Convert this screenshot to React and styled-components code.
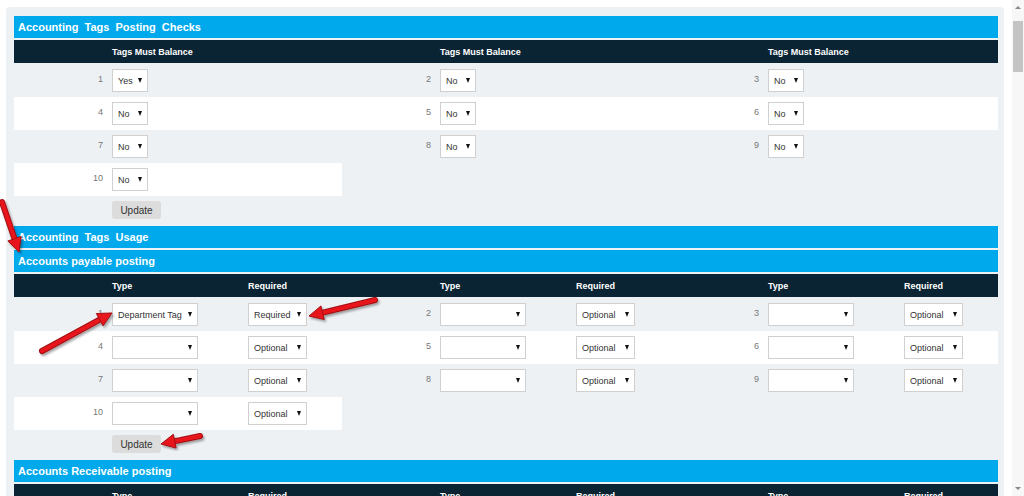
import React from "react";
import styled, { createGlobalStyle } from "styled-components";

const GlobalStyle = createGlobalStyle`
  html, body {
    margin: 0;
    padding: 0;
    background: #fff;
    font-family: "Liberation Sans", Arial, sans-serif;
  }
`

const Page = styled.div`
  position: relative;
  display: flex;
  height: 496px;
  overflow: hidden;
  background: #fff;
`

const Panel = styled.div`
  width: 998px;
  margin: 7px 0 0 6px;
  padding: 9px 6px 0 8px;
  box-sizing: border-box;
  background: #eef1f4;
  border-radius: 4px 4px 0 0;
`

const ScrollTrack = styled.div`
  width: 12px;
  margin-left: 8px;
  display: flex;
  flex-direction: column;
  align-items: center;
  background: #f7f7f7;

  .thumb {
    width: 10px;
    height: 51px;
    margin-top: 6px;
    background: #c4c4c4;
  }
  .spacer {
    flex: 1;
  }
  .arrow {
    width: 0;
    height: 0;
    border-left: 3px solid transparent;
    border-right: 3px solid transparent;
    margin: 6px 0;
  }
  .up {
    border-bottom: 3px solid #888;
  }
  .down {
    border-top: 3px solid #888;
  }
`

const Title = styled.div`
  height: 22px;
  line-height: 23px;
  padding-left: 4px;
  margin-bottom: 2px;
  background: #00a8ec;
  color: #fff;
  font-size: 11px;
  font-weight: bold;
  word-spacing: ${p => (p.$wide ? "3px" : "0")};
`

const HeadRow = styled.div`
  display: grid;
  grid-template-columns: repeat(3, 1fr);
  height: 23px;
  margin-bottom: 1px;
  background: #0b2433;
  color: #fff;
  font-size: 9px;
  font-weight: bold;
`

const Group = styled.div`
  display: grid;
  grid-template-columns: 98px 136px 1fr;
  align-items: center;
`

const Row = styled.div`
  display: grid;
  grid-template-columns: ${p => (p.$partial ? "328px" : "repeat(3, 1fr)")};
  height: 33px;
  background: ${p => (p.$white ? "#fff" : "transparent")};
  width: ${p => (p.$partial ? "328px" : "auto")};
`

const Num = styled.span`
  padding-right: 9px;
  text-align: right;
  color: #777;
  font-size: 9px;
  margin-top: -3px;
`

const Select = styled.div`
  display: flex;
  align-items: center;
  gap: 4px;
  width: ${p => p.$w}px;
  height: 23px;
  box-sizing: border-box;
  padding: 0 5px 0 5px;
  border: 1px solid #d0d0d0;
  background: #fff;
  color: #333;
  font-size: 9px;
  white-space: nowrap;

  &::after {
    content: "";
    margin-left: auto;
    border-left: 2.5px solid transparent;
    border-right: 2.5px solid transparent;
    border-top: 5px solid #111;
  }
`

const UpdateButton = styled.button`
  display: block;
  width: 49px;
  height: 18px;
  margin: 5px 0 7px 98px;
  padding: 0;
  border: none;
  border-radius: 3px;
  background: #dcdcdc;
  color: #333;
  font-family: inherit;
  font-size: 10px;
`

const Overlay = styled.svg`
  position: absolute;
  left: 0;
  top: 0;
  pointer-events: none;
`

const balanceRows = [[1, 2, 3], [4, 5, 6], [7, 8, 9], [10]]
const balanceValue = n => (n === 1 ? "Yes" : "No")

const BalanceGroup = ({ n }) => (
  <Group>
    <Num>{n}</Num>
    <Select $w={36}>{balanceValue(n)}</Select>
  </Group>
)

const UsageGroup = ({ n }) => (
  <Group>
    <Num>{n}</Num>
    <Select $w={86}>{n === 1 ? "Department Tag" : ""}</Select>
    <Select $w={59}>{n === 1 ? "Required" : "Optional"}</Select>
  </Group>
)

const Heads = ({ labels }) => (
  <HeadRow>
    {[0, 1, 2].map(i => (
      <Group key={i}>
        <span />
        {labels.map(l => <span key={l}>{l}</span>)}
      </Group>
    ))}
  </HeadRow>
)

const Rows = ({ Cell }) =>
  balanceRows.map((row, i) => (
    <Row key={i} $white={i % 2 === 1} $partial={row.length === 1}>
      {row.map(n => <Cell key={n} n={n} />)}
    </Row>
  ))

// red callout arrows laid over the form
const arrows = [
  [2, 202, 19, 252],
  [42, 351, 112, 313],
  [375, 300, 309, 316],
  [200, 436, 161, 444],
]

const Arrow = ({ x1, y1, x2, y2 }) => {
  const dx = x2 - x1
  const dy = y2 - y1
  const len = Math.hypot(dx, dy)
  const ux = dx / len
  const uy = dy / len
  const bx = x2 - ux * 14
  const by = y2 - uy * 14
  const w = 7
  const pts = `${x2},${y2} ${bx - uy * w},${by + ux * w} ${bx + uy * w},${by - ux * w}`
  return (
    <g filter="url(#shade)">
      <line x1={x1} y1={y1} x2={bx + ux * 2} y2={by + uy * 2} stroke="#a30c10" strokeWidth="6" strokeLinecap="round" />
      <line x1={x1} y1={y1} x2={bx + ux * 2} y2={by + uy * 2} stroke="#e8181d" strokeWidth="4" strokeLinecap="round" />
      <polygon points={pts} fill="#e8181d" stroke="#a30c10" strokeWidth="1" strokeLinejoin="round" />
    </g>
  )
}

export default function App() {
  return (
    <>
      <GlobalStyle />
      <Page>
        <Panel>
          <Title $wide>Accounting Tags Posting Checks</Title>
          <Heads labels={["Tags Must Balance"]} />
          <Rows Cell={BalanceGroup} />
          <UpdateButton>Update</UpdateButton>

          <Title $wide>Accounting Tags Usage</Title>
          <Title>Accounts payable posting</Title>
          <Heads labels={["Type", "Required"]} />
          <Rows Cell={UsageGroup} />
          <UpdateButton>Update</UpdateButton>

          <Title>Accounts Receivable posting</Title>
          <Heads labels={["Type", "Required"]} />
        </Panel>
        <ScrollTrack>
          <div className="arrow up" />
          <div className="thumb" />
          <div className="spacer" />
          <div className="arrow down" />
        </ScrollTrack>
        <Overlay width="1024" height="496">
          <defs>
            <filter id="shade" x="-20%" y="-20%" width="140%" height="140%">
              <feDropShadow dx="1.5" dy="2" stdDeviation="1.2" floodColor="#000" floodOpacity="0.35" />
            </filter>
          </defs>
          {arrows.map(([x1, y1, x2, y2], i) => (
            <Arrow key={i} x1={x1} y1={y1} x2={x2} y2={y2} />
          ))}
        </Overlay>
      </Page>
    </>
  )
}
